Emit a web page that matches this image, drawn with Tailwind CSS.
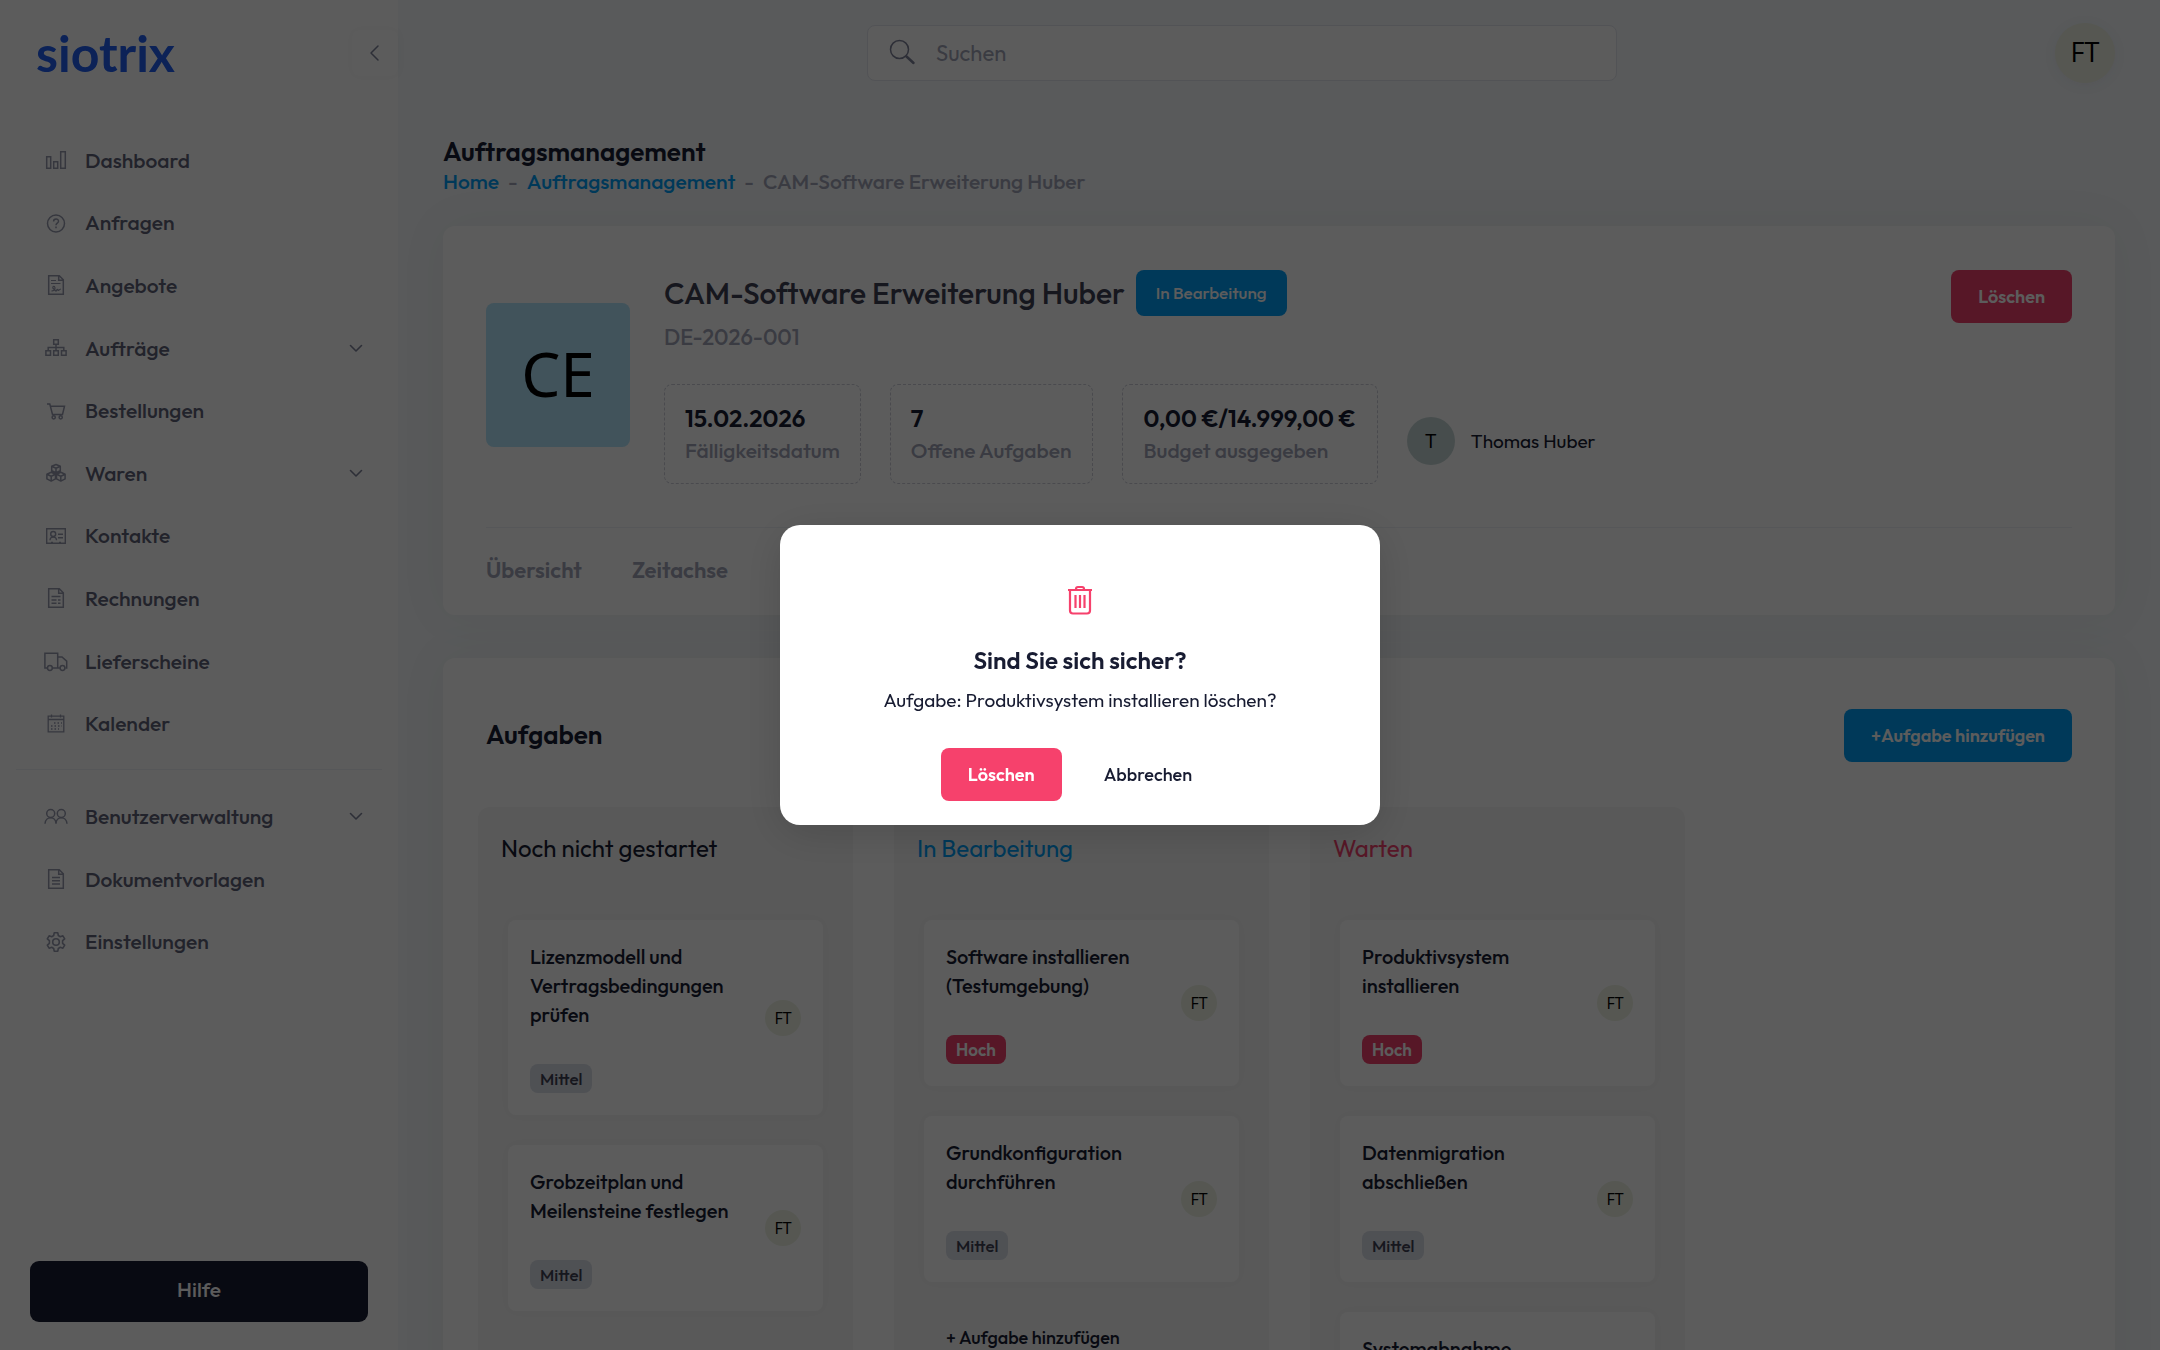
<!DOCTYPE html>
<html lang="de">

<head>
    <meta charset="UTF-8">
    <meta name="viewport" content="width=device-width, initial-scale=1.0">
    <title>Auftragsmanagement - siotrix</title>
    <script src="https://cdn.jsdelivr.net/npm/@tailwindcss/browser@4"></script>
</head>

<body class="h-screen overflow-hidden bg-[#f5f8fb] font-[Outfit,Lato,sans-serif] text-[20px] text-[#181c32]">
    <div class="flex h-full">

        <!-- Sidebar -->
        <aside class="flex w-[398px] shrink-0 flex-col bg-white">
            <div class="flex h-[105px] shrink-0 items-center justify-between pl-9">
                <a href="#" class="font-[Lato,sans-serif] text-[50px] leading-none font-bold text-[#2260f0]">siotrix</a>
                <button aria-label="Menü einklappen" class="flex size-[46px] items-center justify-center rounded-lg bg-white text-[#7e8299] shadow-[0_0_10px_rgba(0,0,0,0.04)]">
                    <svg class="size-5" viewBox="0 0 20 20" fill="none" stroke="currentColor" stroke-width="1.5" stroke-linecap="round" stroke-linejoin="round"><path d="M13 3 6 10l7 7" /></svg>
                </button>
            </div>

            <nav class="mt-6 text-[21px] leading-none font-medium text-[#5e6278]">
                <ul class="flex h-[626px] flex-col pr-[34px] pl-11">
                    <li class="flex-1"><a href="#" class="flex h-full items-center gap-[17px]">
                        <svg class="size-6 text-[#9599ad]" viewBox="0 0 24 24" fill="none" stroke="currentColor" stroke-width="1.5"><path d="M2.7 8.7h4v11.6h-4zM9.7 13.7h4v6.6h-4zM16.7 3.7h4.6v16.6h-4.6z" /></svg>
                        Dashboard</a></li>
                    <li class="flex-1"><a href="#" class="flex h-full items-center gap-[17px]">
                        <svg class="size-6 text-[#9599ad]" viewBox="0 0 24 24" fill="none" stroke="currentColor" stroke-width="1.5"><circle cx="12" cy="12.5" r="8.5" /><path d="M9.6 10.4c0-3.3 4.9-3.2 4.9-.2 0 2-2.5 1.9-2.5 4M12 15.6v1.6" /></svg>
                        Anfragen</a></li>
                    <li class="flex-1"><a href="#" class="flex h-full items-center gap-[17px]">
                        <svg class="size-6 text-[#9599ad]" viewBox="0 0 24 24" fill="none" stroke="currentColor" stroke-width="1.5"><path d="M4.7 2.7h10.6l4 4v14.6H4.7zM14.7 2.7v4.6h4.6" /><path stroke-width="1.2" d="M7 7.5h5M7 10.5h9.5M7.5 17.8c3 .5 4.5-2 3-4.3-1.5-.8-2 .8-1.5 1.8l3 2.8c.8-1 1-1.8 1.5-1.8s.2 1.2.8 1.2 1-1.2 2.7-1.5" /></svg>
                        Angebote</a></li>
                    <li class="flex-1"><a href="#" class="flex h-full items-center gap-[17px]">
                        <svg class="size-6 text-[#9599ad]" viewBox="0 0 24 24" fill="none" stroke="currentColor" stroke-width="1.5"><path d="M9.7 3.7h4.6v4.6H9.7zM1.9 14.7h4.6v4.6H1.9zM9.7 14.7h4.6v4.6H9.7zM17.5 14.7h4.6v4.6h-4.6zM12 8.3v6.4M4.2 14.7v-3.2h15.6v3.2" /></svg>
                        <span class="flex-1">Aufträge</span>
                        <svg class="size-4 text-[#7e8299]" viewBox="0 0 16 16" fill="none" stroke="currentColor" stroke-width="1.6" stroke-linecap="round" stroke-linejoin="round"><path d="m2.5 5.5 5.5 5.5 5.5-5.5" /></svg></a></li>
                    <li class="flex-1"><a href="#" class="flex h-full items-center gap-[17px]">
                        <svg class="size-6 text-[#9599ad]" viewBox="0 0 24 24" fill="none" stroke="currentColor" stroke-width="1.5"><path d="M3 5h2.8l2.7 10.5h10L20.5 7.3H6.5" /><circle cx="9.7" cy="18.3" r="1.6" /><circle cx="16.7" cy="18.3" r="1.6" /></svg>
                        Bestellungen</a></li>
                    <li class="flex-1"><a href="#" class="flex h-full items-center gap-[17px]">
                        <svg class="size-6 text-[#9599ad]" viewBox="0 0 24 24" fill="none" stroke="currentColor" stroke-width="1.5" stroke-linejoin="round"><path d="m12 3.5 4.3 1.8v4.5L12 11.8 7.7 9.8V5.3zM7.7 5.3 12 7.2l4.3-1.9M12 7.2v4.6M7.2 11.3l4.3 1.9v4.7l-4.3 2.2-4.3-2.2v-4.7zM2.9 13.2l4.3 2 4.3-2M7.2 15.2v4.9M16.8 11.3l4.3 1.9v4.7l-4.3 2.2-4.3-2.2v-4.7zM12.5 13.2l4.3 2 4.3-2M16.8 15.2v4.9" /></svg>
                        <span class="flex-1">Waren</span>
                        <svg class="size-4 text-[#7e8299]" viewBox="0 0 16 16" fill="none" stroke="currentColor" stroke-width="1.6" stroke-linecap="round" stroke-linejoin="round"><path d="m2.5 5.5 5.5 5.5 5.5-5.5" /></svg></a></li>
                    <li class="flex-1"><a href="#" class="flex h-full items-center gap-[17px]">
                        <svg class="size-6 text-[#9599ad]" viewBox="0 0 24 24" fill="none" stroke="currentColor" stroke-width="1.4"><path d="M2.7 4.7h18.6v14.6H2.7zM14 10.3h5M14 13.7h5M6 16.3c0-4.2 6.5-4.2 6.5 0M7 18.5h2M15 18.5h2" /><circle cx="9.2" cy="10" r="2.5" /></svg>
                        Kontakte</a></li>
                    <li class="flex-1"><a href="#" class="flex h-full items-center gap-[17px]">
                        <svg class="size-6 text-[#9599ad]" viewBox="0 0 24 24" fill="none" stroke="currentColor" stroke-width="1.5"><path d="M4.7 2.7h10.6l4 4v14.6H4.7zM14.7 2.7v4.6h4.6M7.5 10.5h9M7.5 14h5M14 14h2.5M7.5 17.3h5M14 17.3h2.5" /></svg>
                        Rechnungen</a></li>
                    <li class="flex-1"><a href="#" class="flex h-full items-center gap-[17px]">
                        <svg class="size-6 text-[#9599ad]" viewBox="0 0 24 24" fill="none" stroke="currentColor" stroke-width="1.5"><path d="M3.2 19H.9V4.2h12.8V19H8.5M13.7 8H18l4.7 4.2V19h-1.2M13.7 19h2.2" /><circle cx="5.9" cy="19" r="2.4" /><circle cx="18.5" cy="19" r="2.4" /></svg>
                        Lieferscheine</a></li>
                    <li class="flex-1"><a href="#" class="flex h-full items-center gap-[17px]">
                        <svg class="size-6 text-[#9599ad]" viewBox="0 0 24 24" fill="none" stroke="currentColor" stroke-width="1.3"><path d="M4.2 4.2h15.6v15.6H4.2zM4.2 7.5h15.6M7.5 2.5v3M16.5 2.5v3" /><path stroke-dasharray="1.5 2" d="M10 11h8M7 14h11M7 17h8" /></svg>
                        Kalender</a></li>
                </ul>
                <hr class="mx-4 mt-[14px] border-[#eff2f5]">
                <ul class="mt-[15px] flex h-[188px] flex-col pr-[34px] pl-11">
                    <li class="flex-1"><a href="#" class="flex h-full items-center gap-[17px]">
                        <svg class="size-6 text-[#9599ad]" viewBox="0 0 24 24" fill="none" stroke="currentColor" stroke-width="1.5"><circle cx="6.7" cy="9.5" r="4" /><circle cx="17.3" cy="9.5" r="4" /><path d="M1 19.8c.5-8 10.9-8 11 0 .1-8 10.500-8 11 0" /></svg>
                        <span class="flex-1">Benutzerverwaltung</span>
                        <svg class="size-4 text-[#7e8299]" viewBox="0 0 16 16" fill="none" stroke="currentColor" stroke-width="1.6" stroke-linecap="round" stroke-linejoin="round"><path d="m2.5 5.5 5.5 5.5 5.5-5.5" /></svg></a></li>
                    <li class="flex-1"><a href="#" class="flex h-full items-center gap-[17px]">
                        <svg class="size-6 text-[#9599ad]" viewBox="0 0 24 24" fill="none" stroke="currentColor" stroke-width="1.5"><path d="M4.7 2.7h10.6l4 4v14.6H4.7zM14.7 2.7v4.6h4.6M8 10.5h8M8 13.7h8M8 17h8" /></svg>
                        Dokumentvorlagen</a></li>
                    <li class="flex-1"><a href="#" class="flex h-full items-center gap-[17px]">
                        <svg class="size-6 text-[#9599ad]" viewBox="0 0 24 24" fill="none" stroke="currentColor" stroke-width="1.6" stroke-linejoin="round"><path d="M10.2 2.8h3.6l.5 2.7 2 1.2 2.6-.9 1.8 3.1-2.1 1.8v2.6l2.1 1.8-1.8 3.1-2.6-.9-2 1.2-.5 2.7h-3.6l-.5-2.7-2-1.2-2.6.9-1.8-3.1 2.1-1.8v-2.6L3.3 8.9l1.8-3.1 2.6.9 2-1.2z" /><circle cx="12" cy="12" r="3.3" /></svg>
                        Einstellungen</a></li>
                </ul>
            </nav>

            <button class="mx-[30px] mt-auto mb-7 h-[61px] rounded-[9px] bg-[#181c32] pb-1 text-[21px] font-medium text-white">Hilfe</button>
        </aside>

        <!-- Page -->
        <div class="flex min-w-0 flex-1 flex-col px-[45px]">
            <header class="flex h-[105px] shrink-0 items-center">
                <div class="flex flex-1 justify-center pr-[14px]">
                    <label class="flex h-[56px] w-full max-w-[750px] items-center gap-5 rounded-lg border border-[#e4e6ef] bg-white pl-5">
                        <svg class="size-7 text-[#7e8299]" viewBox="0 0 28 28" fill="none" stroke="currentColor" stroke-width="1.5"><circle cx="11.5" cy="10.5" r="9" /><path stroke-width="2.5" stroke-linecap="round" d="m18.5 17.5 7 6.5" /></svg>
                        <input type="text" aria-label="Suchen" placeholder="Suchen" class="h-full flex-1 text-[22px] outline-none placeholder:text-[#a1a5b7]">
                    </label>
                </div>
                <a href="#" class="flex size-[60px] items-center justify-center rounded-full bg-[#edf2e2] font-['Open_Sans',sans-serif] text-[27px] text-black shadow-[0_2px_14px_rgba(60,60,110,0.06)]">FT</a>
            </header>

            <main>
                <h1 class="mt-[31px] text-[26px] leading-[32px] font-semibold">Auftragsmanagement</h1>
                <nav class="flex gap-[9px] text-[21px] leading-[27px] font-medium text-[#a1a5b7]">
                    <a href="#" class="text-[#009ef7]">Home</a>
                    <span>-</span>
                    <a href="#" class="text-[#009ef7]">Auftragsmanagement</a>
                    <span>-</span>
                    <span>CAM-Software Erweiterung Huber</span>
                </nav>

                <!-- Order summary -->
                <section class="mt-[31px] rounded-xl bg-white px-[43px] pt-[44px] shadow-[0_0_50px_rgba(82,93,20,0.06)]">
                    <div class="flex gap-[34px]">
                        <div class="mt-[33px] flex size-[144px] items-center justify-center rounded-lg bg-[#b3e5fc] pb-1 font-['Noto_Sans',sans-serif] text-[62px] leading-none text-black">CE</div>
                        <div class="flex-1">
                            <div class="flex h-[46px] items-center gap-[11px]">
                                <h2 class="text-[30px] font-medium text-[#3f4254]">CAM-Software Erweiterung Huber</h2>
                                <span class="flex h-[46px] items-center rounded-lg bg-[#009ef7] px-5 text-[17px] font-medium text-white">In Bearbeitung</span>
                            </div>
                            <p class="mt-1 text-[22px] leading-[34px] font-medium text-[#a1a5b7]">DE-2026-001</p>
                            <div class="mt-[30px] flex items-center gap-[29px]">
                                <dl class="flex h-[100px] flex-col-reverse justify-center rounded-lg border border-dashed border-[#ccced8] px-5">
                                    <dt class="text-[21px] leading-[32px] font-medium text-[#a1a5b7]">Fälligkeitsdatum</dt>
                                    <dd class="text-[24px] leading-[32px] font-semibold">15.02.2026</dd>
                                </dl>
                                <dl class="flex h-[100px] flex-col-reverse justify-center rounded-lg border border-dashed border-[#ccced8] px-5">
                                    <dt class="text-[21px] leading-[32px] font-medium text-[#a1a5b7]">Offene Aufgaben</dt>
                                    <dd class="text-[24px] leading-[32px] font-semibold">7</dd>
                                </dl>
                                <dl class="flex h-[100px] flex-col-reverse justify-center rounded-lg border border-dashed border-[#ccced8] px-[21px]">
                                    <dt class="text-[21px] leading-[32px] font-medium text-[#a1a5b7]">Budget ausgegeben</dt>
                                    <dd class="text-[24px] leading-[32px] font-semibold">0,00 €/14.999,00 €</dd>
                                </dl>
                                <div class="flex items-center gap-4 pt-[14px]">
                                    <span class="flex size-[48px] items-center justify-center rounded-full bg-[#c6d6d6] font-['Open_Sans',sans-serif] text-[20px] text-black">T</span>
                                    <span class="text-[19px]">Thomas Huber</span>
                                </div>
                            </div>
                        </div>
                        <button class="h-[53px] rounded-lg bg-[#f1416c] px-[27px] text-[18px] font-semibold text-white">Löschen</button>
                    </div>
                    <div class="mt-[43px] flex h-[88px] items-center gap-[50px] border-t border-[#eff2f5] pb-[2px] text-[22px] font-semibold text-[#a1a5b7]">
                        <a href="#">Übersicht</a>
                        <a href="#">Zeitachse</a>
                    </div>
                </section>

                <!-- Task board -->
                <section class="mt-[43px] rounded-xl bg-white px-[43px] pt-[51px] shadow-[0_0_50px_rgba(82,93,20,0.06)]">
                    <div class="flex h-[53px] items-center justify-between">
                        <h2 class="pb-[2px] text-[26px] font-semibold">Aufgaben</h2>
                        <button class="h-[53px] rounded-lg bg-[#009ef7] px-[27px] text-[18px] font-semibold text-white">+Aufgabe hinzufügen</button>
                    </div>
                    <div id="board" class="-mx-2 mt-[45px] flex gap-[41px]"></div>
                </section>
            </main>
        </div>
    </div>

    <!-- Confirm dialog -->
    <div class="fixed inset-0 flex items-center justify-center bg-black/64">
        <div role="alertdialog" aria-labelledby="dialogTitle" class="flex h-[300px] w-[600px] flex-col items-center rounded-[20px] bg-white pt-[60px] shadow-[0_8px_44px_rgba(0,0,0,0.15)]">
            <svg class="h-[30px] w-[26px] text-[#f6416c]" viewBox="0 0 26 30" fill="none" stroke="currentColor" stroke-width="2.2"><path d="M1 5h24M3 5v20.5Q3 28.500 6 28.500h14q3 0 3-3V5M9 5V4q0-2 2-2h4q2 0 2 2v1M8.500 10v13M13 10v13M17.500 10v13" /></svg>
            <h3 id="dialogTitle" class="mt-[27px] text-[24px] leading-[36px] font-semibold">Sind Sie sich sicher?</h3>
            <p class="mt-1 text-[19px] leading-[36px]">Aufgabe: Produktivsystem installieren löschen?</p>
            <div class="mt-[30px] flex gap-[15px]">
                <button class="h-[53px] rounded-lg bg-[#f6416c] px-[27px] text-[18px] font-semibold text-white">Löschen</button>
                <button class="h-[53px] rounded-lg px-[27px] text-[18px] font-medium">Abbrechen</button>
            </div>
        </div>
    </div>

    <script>
        const columns = [
            {
                title: "Noch nicht gestartet", color: "text-[#181c32]",
                tasks: [["Lizenzmodell und Vertragsbedingungen prüfen", "Mittel"], ["Grobzeitplan und Meilensteine festlegen", "Mittel"]]
            },
            {
                title: "In Bearbeitung", color: "text-[#009ef7]",
                tasks: [["Software installieren (Testumgebung)", "Hoch"], ["Grundkonfiguration durchführen", "Mittel"]]
            },
            {
                title: "Warten", color: "text-[#f1416c]",
                tasks: [["Produktivsystem installieren", "Hoch"], ["Datenmigration abschließen", "Mittel"], ["Systemabnahme", "Mittel"]]
            }
        ];
        const badges = {
            Hoch: "bg-[#f1416c] font-semibold text-white",
            Mittel: "bg-[#dbdfe9] font-medium text-[#3f4254]"
        };

        function taskCard(task) {
            return `
                <article class="flex items-center justify-between rounded-lg bg-white p-[22px] shadow-[0_0_14px_rgba(0,0,0,0.02)]">
                    <div>
                        <h4 class="text-[20px] leading-[29px] font-medium">${task[0]}</h4>
                        <span class="mt-[35px] flex h-[29px] w-fit items-center rounded-lg px-[10px] text-[17px] ${badges[task[1]]}">${task[1]}</span>
                    </div>
                    <span class="flex size-9 shrink-0 items-center justify-center rounded-full bg-[#edf2e2] font-['Open_Sans',sans-serif] text-[16px] text-black">FT</span>
                </article>`;
        }

        document.getElementById("board").innerHTML = columns.map(col => `
            <div class="h-[800px] w-[375px] rounded-xl bg-[#f5f5f5]">
                <h3 class="px-[23px] pt-[22px] text-[24px] leading-[38px] ${col.color}">${col.title}</h3>
                <div class="mt-[53px] flex flex-col gap-[30px] px-[30px]">${col.tasks.map(taskCard).join("")}</div>
                <button class="mt-[41px] px-[52px] text-[18px] leading-[29px] font-medium">+ Aufgabe hinzufügen</button>
            </div>`).join("");
    </script>
</body>

</html>
